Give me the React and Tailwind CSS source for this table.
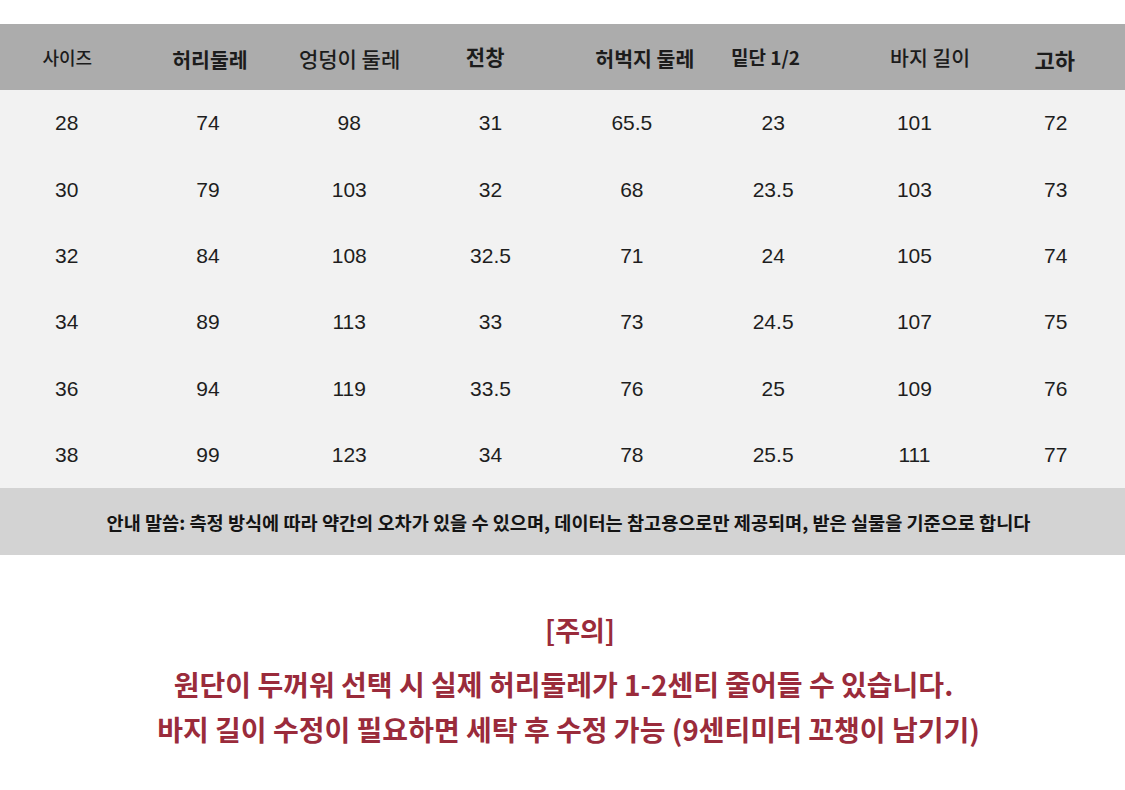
const KR = 'font-["Noto_Sans_CJK_KR","Noto_Sans",sans-serif]';

// header cells: label, extra classes for size/weight and small nudge
const headers = [
  { label: '사이즈', cls: 'text-[18px] font-medium pr-[6px]' },
  { label: '허리둘레', cls: 'text-[20.5px] font-bold pr-[2px] pt-[4px]' },
  { label: '엉덩이 둘레', cls: 'text-[21px] font-medium pr-[4px] pt-[3px]' },
  { label: '전창', cls: 'text-[21px] font-bold pr-[14px]' },
  { label: '허벅지 둘레', cls: 'text-[20.5px] font-bold pl-[24px] pt-[2px]' },
  { label: '밑단 1/2', cls: 'text-[19px] font-bold pr-[16px]' },
  { label: '바지 길이', cls: 'text-[20.5px] font-medium pl-[32px]' },
  { label: '고하', cls: 'text-[22px] font-bold pt-[4px]' },
];

const rows = [
  ['28', '74', '98', '31', '65.5', '23', '101', '72'],
  ['30', '79', '103', '32', '68', '23.5', '103', '73'],
  ['32', '84', '108', '32.5', '71', '24', '105', '74'],
  ['34', '89', '113', '33', '73', '24.5', '107', '75'],
  ['36', '94', '119', '33.5', '76', '25', '109', '76'],
  ['38', '99', '123', '34', '78', '25.5', '111', '77'],
];

export default function App() {
  return (
    <div className="w-[1125px] h-[790px] bg-white overflow-hidden flex flex-col">
      <div className="h-[24px] shrink-0" />

      {/* Header */}
      <div className={`h-[66px] shrink-0 bg-[#acacac] grid grid-cols-8 text-[#1c1c1c] ${KR}`}>
        {headers.map((h) => (
          <div key={h.label} className={`flex items-center justify-center ${h.cls}`}>
            {h.label}
          </div>
        ))}
      </div>

      {/* Data rows */}
      <div className='bg-[#f2f2f2] shrink-0 font-["Liberation_Sans",Arial,sans-serif] text-[21px] text-[#1e1e1e]'>
        {rows.map((r, i) => (
          <div key={i} className="grid grid-cols-[repeat(8,141.3px)] -ml-[4px] h-[66.33px]">
            {r.map((v, j) => (
              <div key={j} className="flex items-center justify-center">
                {v}
              </div>
            ))}
          </div>
        ))}
      </div>

      {/* Note */}
      <div className={`h-[67px] shrink-0 bg-[#d3d3d3] flex items-center justify-center text-[18.6px] font-bold text-[#141414] pl-[12px] ${KR}`}>
        안내 말씀: 측정 방식에 따라 약간의 오차가 있을 수 있으며, 데이터는 참고용으로만 제공되며, 받은 실물을 기준으로 합니다
      </div>

      {/* Caution */}
      <div className={`flex flex-col items-center pt-[52px] text-[#9a2b3b] ${KR}`}>
        <p className="text-[27px] font-bold leading-[45px] pl-[35px]">[주의]</p>
        <p className="text-[28px] font-bold leading-[45px] mt-[10px] pl-[2px]">
          원단이 두꺼워 선택 시 실제 허리둘레가 1-2센티 줄어들 수 있습니다.
        </p>
        <p className="text-[28px] font-bold leading-[45px] pl-[12px]">
          바지 길이 수정이 필요하면 세탁 후 수정 가능 (9센티미터 꼬챙이 남기기)
        </p>
      </div>
    </div>
  );
}
